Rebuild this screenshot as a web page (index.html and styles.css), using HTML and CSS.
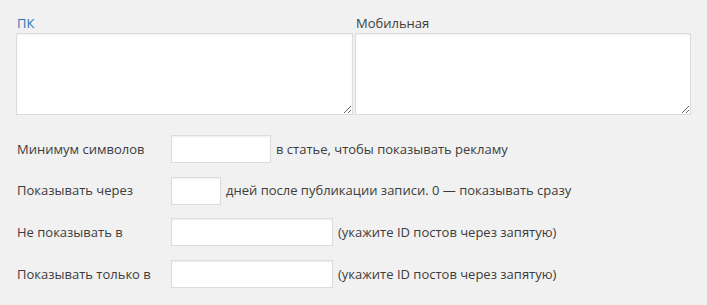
FILE: index.html
```html
<!DOCTYPE html>
<html lang="ru">
<head>
<meta charset="utf-8">
<link rel="stylesheet" href="styles.css">
</head>
<body>
<div class="page">
  <div class="codes">
    <div class="code-col">
      <label class="code-label code-label--active">ПК</label>
      <textarea class="code-area code-area--wide"></textarea>
    </div>
    <div class="code-col">
      <label class="code-label">Мобильная</label>
      <textarea class="code-area"></textarea>
    </div>
  </div>
  <div class="options">
    <div class="opt-row">
      <span class="opt-label">Минимум символов</span>
      <input class="opt-input opt-input--md" type="text">
      <span class="opt-note">в статье, чтобы показывать рекламу</span>
    </div>
    <div class="opt-row">
      <span class="opt-label">Показывать через</span>
      <input class="opt-input opt-input--sm" type="text">
      <span class="opt-note">дней после публикации записи. 0 — показывать сразу</span>
    </div>
    <div class="opt-row">
      <span class="opt-label">Не показывать в</span>
      <input class="opt-input opt-input--lg" type="text">
      <span class="opt-note">(укажите ID постов через запятую)</span>
    </div>
    <div class="opt-row">
      <span class="opt-label">Показывать только в</span>
      <input class="opt-input opt-input--lg" type="text">
      <span class="opt-note">(укажите ID постов через запятую)</span>
    </div>
  </div>
</div>
</body>
</html>
```
FILE: styles.css
```css
html, body {
  margin: 0;
  padding: 0;
  background: #f1f1f1;
}
body {
  font-family: "Open Sans", "Noto Sans", sans-serif;
  font-size: 13px;
  line-height: 19px;
  color: #3c3c3c;
}
.page {
  padding: 14px 0 0 16px;
}
.codes {
  display: grid;
  grid-template-columns: 337px 336px;
  column-gap: 2px;
}
.code-col {
  display: flex;
  flex-direction: column;
}
.code-label {
  display: block;
  padding-left: 1px;
  line-height: 19px;
}
.code-label--active {
  color: #2a78b8;
}
.code-area {
  display: block;
  box-sizing: border-box;
  width: 100%;
  height: 82px;
  margin: 0;
  border: 1px solid #dcdcdc;
  background: #fff;
  box-shadow: inset 0 1px 2px rgba(0, 0, 0, 0.07);
  font: inherit;
}
.options {
  display: flex;
  flex-direction: column;
  row-gap: 13.7px;
  padding-top: 20px;
}
.opt-row {
  display: flex;
  align-items: center;
  height: 28px;
}
.opt-label {
  width: 154px;
  padding-left: 1px;
  flex: none;
}
.opt-input {
  box-sizing: border-box;
  height: 28px;
  margin: 0 5px 0 0;
  padding: 0 6px;
  border: 1px solid #dcdcdc;
  background: #fff;
  box-shadow: inset 0 1px 2px rgba(0, 0, 0, 0.07);
  font: inherit;
  flex: none;
}
.opt-input--sm { width: 50px; }
.opt-input--md { width: 100px; }
.opt-input--lg { width: 162px; }
.opt-note {
  white-space: nowrap;
}
```
